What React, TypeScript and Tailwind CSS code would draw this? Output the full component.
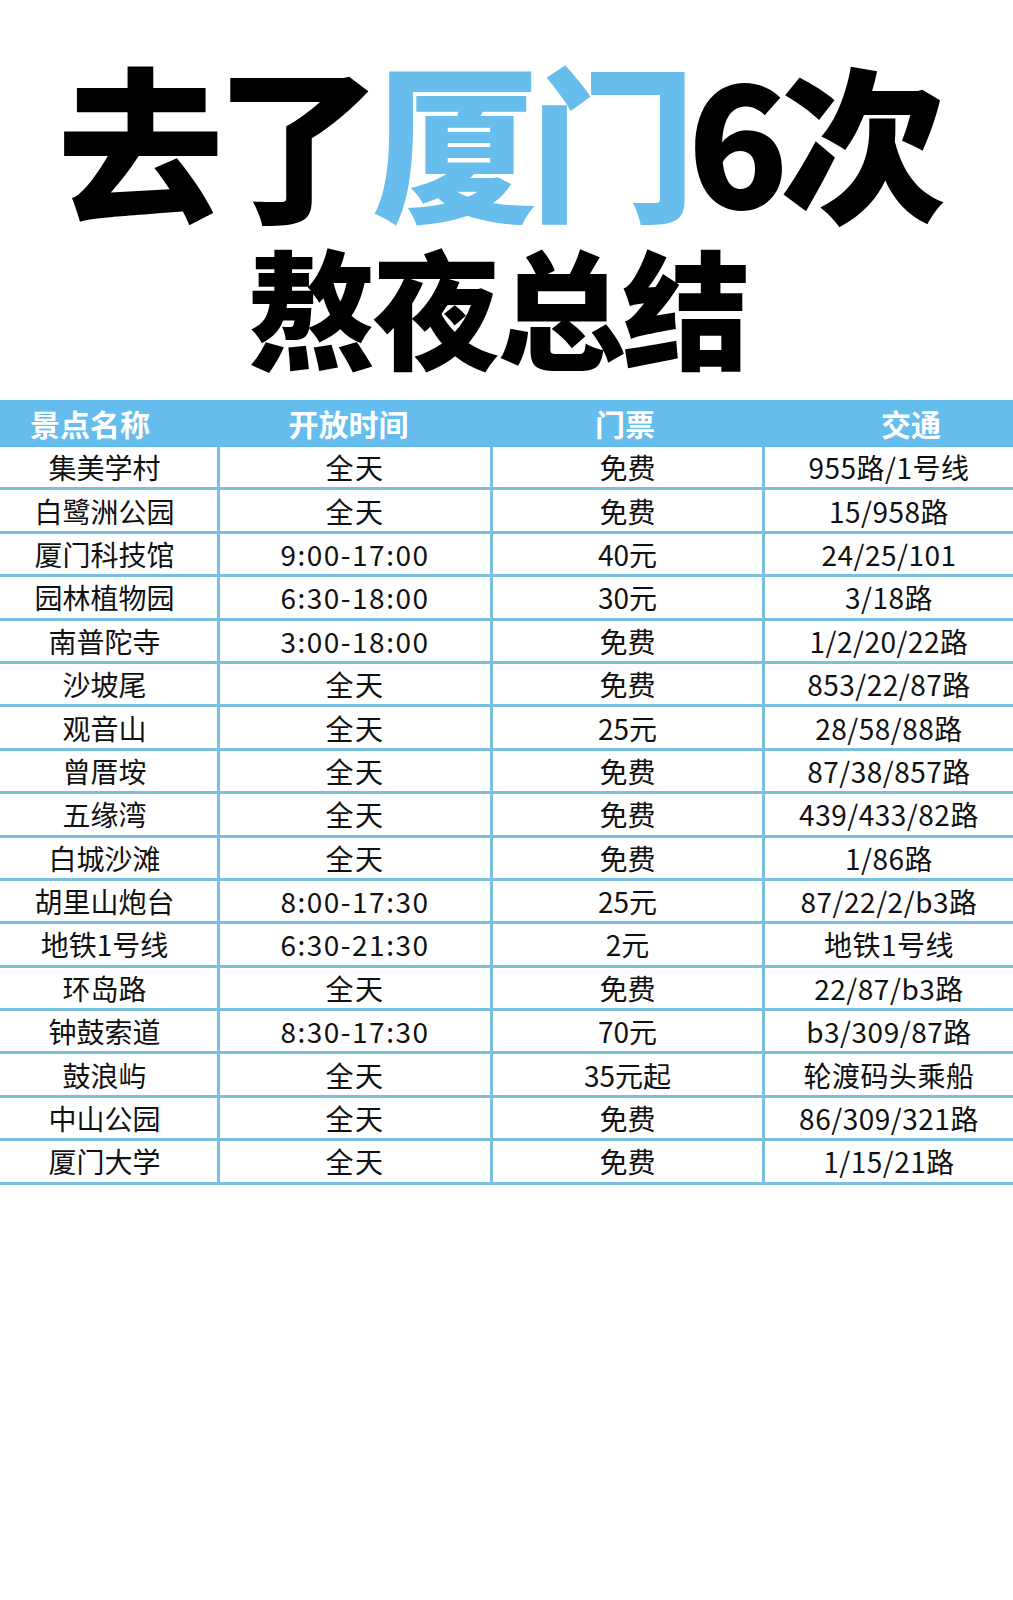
import React from 'react';

const rows: [string, string, string, string][] = [
  ['集美学村', '全天', '免费', '955路/1号线'],
  ['白鹭洲公园', '全天', '免费', '15/958路'],
  ['厦门科技馆', '9:00-17:00', '40元', '24/25/101'],
  ['园林植物园', '6:30-18:00', '30元', '3/18路'],
  ['南普陀寺', '3:00-18:00', '免费', '1/2/20/22路'],
  ['沙坡尾', '全天', '免费', '853/22/87路'],
  ['观音山', '全天', '25元', '28/58/88路'],
  ['曾厝垵', '全天', '免费', '87/38/857路'],
  ['五缘湾', '全天', '免费', '439/433/82路'],
  ['白城沙滩', '全天', '免费', '1/86路'],
  ['胡里山炮台', '8:00-17:30', '25元', '87/22/2/b3路'],
  ['地铁1号线', '6:30-21:30', '2元', '地铁1号线'],
  ['环岛路', '全天', '免费', '22/87/b3路'],
  ['钟鼓索道', '8:30-17:30', '70元', 'b3/309/87路'],
  ['鼓浪屿', '全天', '35元起', '轮渡码头乘船'],
  ['中山公园', '全天', '免费', '86/309/321路'],
  ['厦门大学', '全天', '免费', '1/15/21路'],
];

const font = { fontFamily: '"Noto Sans CJK SC", "Noto Sans", sans-serif' };

export default function App() {
  return (
    <div className="min-h-[1600px] w-[1013px] bg-white" style={font}>
      <div className="flex flex-col items-center pt-[57px] pr-[18px]">
        <h1 className="flex items-center text-[166px] leading-[160px] font-black tracking-[-8.5px] text-black">
          <span>去了</span>
          <span className="text-[#67bdec]">厦门</span>
          <span>6次</span>
        </h1>
        <h2 className="mt-[24px] text-[128px] leading-[128px] font-black tracking-[-3px] text-black">熬夜总结</h2>
      </div>

      <div className="mt-[31px]">
        <div className="grid h-[47px] grid-cols-[220px_273px_272px_1fr] items-center bg-[#65bdee] text-[30px] font-bold text-white">
          <div className="pl-[30px]">景点名称</div>
          <div className="pr-[16px] text-center">开放时间</div>
          <div className="pr-[8px] text-center">门票</div>
          <div className="pl-[44px] text-center">交通</div>
        </div>
        {rows.map((r, i) => (
          <div
            key={i}
            className="grid h-[43.4px] grid-cols-[220px_273px_272px_1fr] border-b-[3px] border-[#78bfe0] text-[28px] leading-none text-[#111]"
          >
            <div className="flex items-center justify-center border-r-[3px] border-[#78bfe0] pr-[8px]">{r[0]}</div>
            <div className="flex items-center justify-center border-r-[3px] border-[#78bfe0] tracking-[1.5px]">{r[1]}</div>
            <div className="flex items-center justify-center border-r-[3px] border-[#78bfe0]">{r[2]}</div>
            <div className="flex items-center justify-center tracking-[0.5px]">{r[3]}</div>
          </div>
        ))}
      </div>
    </div>
  );
}
